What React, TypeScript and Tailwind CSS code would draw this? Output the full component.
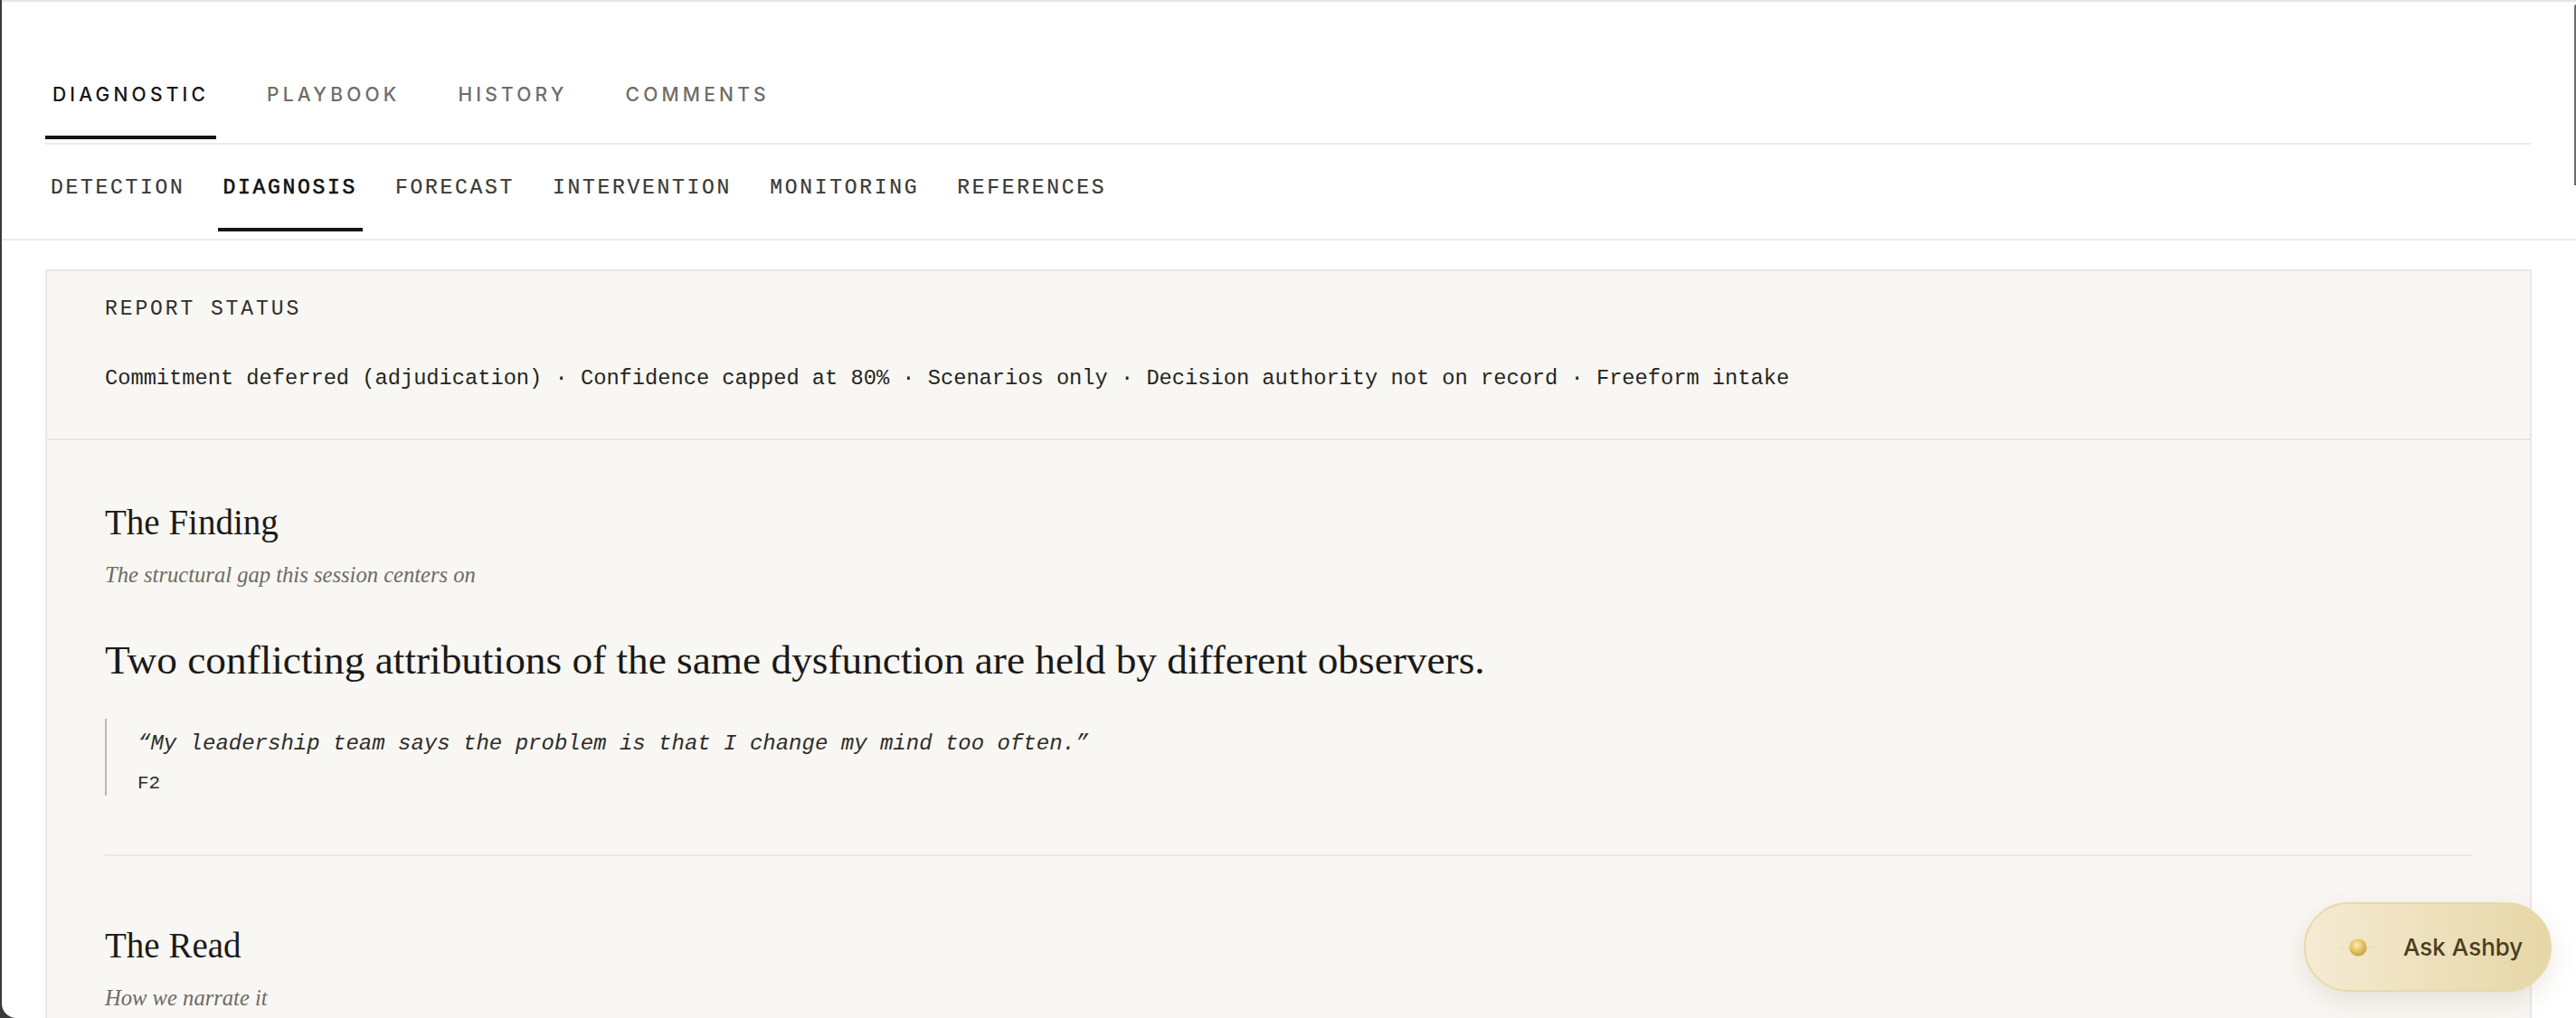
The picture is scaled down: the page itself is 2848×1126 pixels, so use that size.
import React from "react";

const mainTabs = ["DIAGNOSTIC", "PLAYBOOK", "HISTORY", "COMMENTS"];
const subTabs = [
  "DETECTION",
  "DIAGNOSIS",
  "FORECAST",
  "INTERVENTION",
  "MONITORING",
  "REFERENCES",
];

const statusItems = [
  "Commitment deferred (adjudication)",
  "Confidence capped at 80%",
  "Scenarios only",
  "Decision authority not on record",
  "Freeform intake",
];

function AshbyOrb() {
  return (
    <svg width="48" height="24" viewBox="0 0 48 24" aria-hidden="true">
      <defs>
        <radialGradient id="orb-core" cx="42%" cy="36%" r="64%">
          <stop offset="0" stopColor="#fbefb8" />
          <stop offset="0.55" stopColor="#e3c466" />
          <stop offset="1" stopColor="#c8a343" />
        </radialGradient>
        <radialGradient id="orb-glow">
          <stop offset="0" stopColor="#e6c96c" stopOpacity="0.6" />
          <stop offset="1" stopColor="#e6c96c" stopOpacity="0" />
        </radialGradient>
      </defs>
      <line x1="2" y1="12" x2="46" y2="12" stroke="#d6c38a" strokeOpacity="0.35" strokeWidth="1" />
      <circle cx="24" cy="12" r="12" fill="url(#orb-glow)" />
      <circle cx="24" cy="12" r="9.5" fill="url(#orb-core)" />
    </svg>
  );
}

function SectionHeading({ title, subtitle }: { title: string; subtitle: string }) {
  return (
    <>
      <h2 className="font-['Liberation_Serif',serif] text-[39px] leading-[48px] text-[#1c1b19]">
        {title}
      </h2>
      <p className="mt-[16px] font-['Liberation_Serif',serif] italic text-[24.6px] leading-[36px] text-[#6e6a63]">
        {subtitle}
      </p>
    </>
  );
}

export default function App() {
  return (
    <div className="h-screen w-full overflow-hidden bg-[#3a3a3a] pl-[2px]">
      <div className="relative h-full overflow-hidden rounded-bl-[16px] border-t-2 border-[#e6e6e6] bg-white">
        {/* Top level tabs */}
        <nav className="pl-[48px] pr-[50px] pt-[87px]">
          <div className="mb-[4px] flex gap-[48px]">
            {mainTabs.map((tab, i) => (
              <button
                key={tab}
                className={`border-b-4 px-[8px] pb-[29px] font-['Inter',sans-serif] text-[21px] font-medium leading-[32px] tracking-[0.2em] ${
                  i === 0
                    ? "border-[#161616] text-[#141414]"
                    : "border-transparent text-[#706c66]"
                }`}
              >
                {tab}
              </button>
            ))}
          </div>
          <div className="h-[2px] bg-[#ebebeb]" />
        </nav>

        {/* Diagnostic sub tabs */}
        <div className="border-b-2 border-[#ebebeb] pb-[8px] pl-[48px] pt-[32px]">
          <div className="flex gap-[30px]">
            {subTabs.map((tab, i) => (
              <button
                key={tab}
                className={`border-b-4 px-[6px] pb-[28px] font-['Liberation_Mono',monospace] text-[23px] leading-[32px] tracking-[2.7px] ${
                  i === 1
                    ? "border-[#161616] text-[#111] [-webkit-text-stroke:0.6px_#111]"
                    : "border-transparent text-[#3b3935] [-webkit-text-stroke:0.2px_#3b3935]"
                }`}
              >
                {tab}
              </button>
            ))}
          </div>
        </div>

        <main className="pl-[48px] pr-[49px] pt-[32px]">
          <div className="border-2 border-[#e9e7e2] bg-[#f8f7f3]">
            {/* Report status */}
            <section className="border-b-2 border-[#e9e7e2] px-[64px] pb-[48px] pt-[26px]">
              <div className="font-['Liberation_Mono',monospace] text-[23px] leading-[32px] tracking-[2.9px] text-[#2f2e2b]">
                REPORT STATUS
              </div>
              <p className="mt-[43px] font-['Liberation_Mono',monospace] text-[23.7px] leading-[36px] text-[#262522]">
                {statusItems.join(" · ")}
              </p>
            </section>

            <div className="px-[64px] pb-[160px] pt-[67px]">
              {/* The Finding */}
              <section>
                <SectionHeading title="The Finding" subtitle="The structural gap this session centers on" />
                <p className="mt-[46px] font-['Liberation_Serif',serif] text-[45.3px] leading-[60px] text-[#1a1917]">
                  Two conflicting attributions of the same dysfunction are held by different observers.
                </p>
                <blockquote className="mt-[35px] border-l-2 border-[#bab6ae] pl-[34px] pt-[10px]">
                  <p className="font-['Liberation_Mono',monospace] italic text-[24px] leading-[36px] text-[#2e2d2a]">
                    “My leadership team says the problem is that I change my mind too often.”
                  </p>
                  <div className="mt-[13px] font-['Liberation_Mono',monospace] text-[21px] leading-[26px] text-[#2e2d2a]">
                    F2
                  </div>
                </blockquote>
              </section>

              <div className="mt-[65px] h-[2px] bg-[#e9e7e2]" />

              {/* The Read */}
              <section className="pt-[75px]">
                <SectionHeading title="The Read" subtitle="How we narrate it" />
              </section>
            </div>
          </div>
        </main>

        {/* Overlay scrollbar thumb */}
        <div className="absolute right-0 top-[3px] h-[200px] w-[2px] rounded-tl-[2px] bg-[#6b6a72]" />

        {/* Assistant launcher */}
        <button className="absolute bottom-[29px] right-[27px] flex h-[99px] w-[274px] items-center rounded-full border-2 border-[#e8d9ab] bg-gradient-to-r from-[#f5ebd3] to-[#e6d7a7] pl-[34px] shadow-[0_10px_28px_rgba(120,100,40,0.14)]">
          <AshbyOrb />
          <span className="ml-[26px] font-['Inter',sans-serif] text-[26px] font-medium text-[#4b3d1e]">
            Ask Ashby
          </span>
        </button>
      </div>
    </div>
  );
}
